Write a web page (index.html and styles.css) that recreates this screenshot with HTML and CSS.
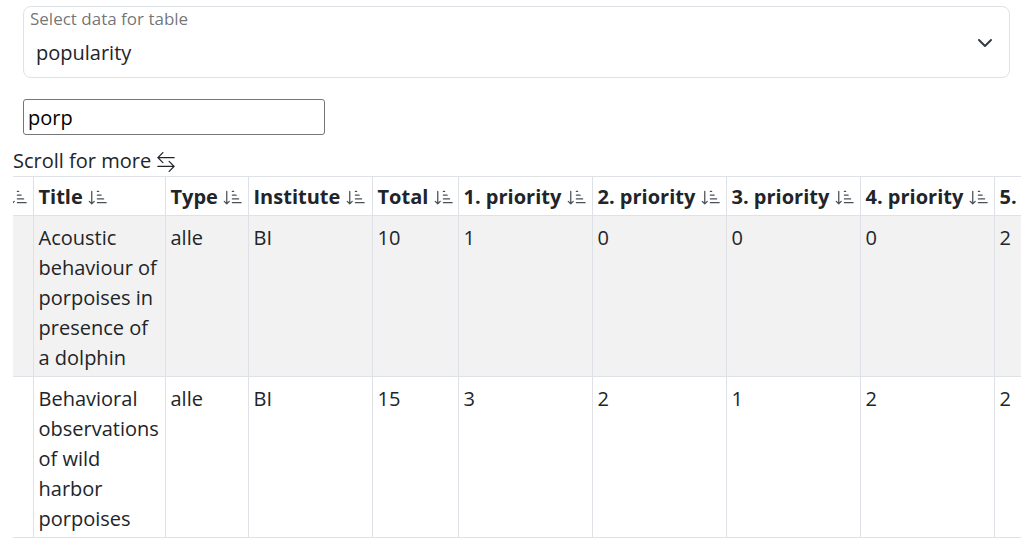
FILE: index.html
```html
<!DOCTYPE html>
<html lang="en">
<head>
<meta charset="utf-8">
<title>Popularity table</title>
<link rel="stylesheet" href="styles.css">
</head>
<body>
<div class="page">
  <div class="floating-select">
    <select class="select-control" id="dataSelect">
      <option selected>popularity</option>
      <option>priorities</option>
    </select>
    <label class="select-label" for="dataSelect">Select data for table</label>
    <svg class="chevron" viewBox="0 0 16 16" width="16" height="16" aria-hidden="true"><path fill="none" stroke="#343a40" stroke-linecap="round" stroke-linejoin="round" stroke-width="2" d="m2 5 6 6 6-6"/></svg>
  </div>

  <input class="filter-input" type="text" value="porp">

  <div class="scroll-hint">Scroll for more <svg class="lr-icon" viewBox="0 0 16 16" width="20" height="20" aria-hidden="true"><path fill="currentColor" fill-rule="evenodd" d="M1 11.5a.5.5 0 0 0 .5.5h11.793l-3.147 3.146a.5.5 0 0 0 .708.708l4-4a.5.5 0 0 0 0-.708l-4-4a.5.5 0 0 0-.708.708L13.293 11H1.5a.5.5 0 0 0-.5.5m14-7a.5.5 0 0 1-.5.5H2.707l3.147 3.146a.5.5 0 1 1-.708.708l-4-4a.5.5 0 0 1 0-.708l4-4a.5.5 0 1 1 .708.708L2.707 4H14.5a.5.5 0 0 1 .5.5"/></svg></div>

  <div class="table-scroll" id="tableScroll">
    <table class="data-table">
      <colgroup>
        <col class="c-id"><col class="c-title"><col class="c-type"><col class="c-inst"><col class="c-total">
        <col class="c-prio"><col class="c-prio"><col class="c-prio"><col class="c-prio"><col class="c-prio">
      </colgroup>
      <thead>
        <tr>
          <th class="th-id">ID <svg class="sort" viewBox="0 0 16 16"><use href="#sorticon"/></svg></th>
          <th>Title <svg class="sort" viewBox="0 0 16 16"><use href="#sorticon"/></svg></th>
          <th>Type <svg class="sort" viewBox="0 0 16 16"><use href="#sorticon"/></svg></th>
          <th>Institute <svg class="sort" viewBox="0 0 16 16"><use href="#sorticon"/></svg></th>
          <th>Total <svg class="sort" viewBox="0 0 16 16"><use href="#sorticon"/></svg></th>
          <th>1. priority <svg class="sort" viewBox="0 0 16 16"><use href="#sorticon"/></svg></th>
          <th>2. priority <svg class="sort" viewBox="0 0 16 16"><use href="#sorticon"/></svg></th>
          <th>3. priority <svg class="sort" viewBox="0 0 16 16"><use href="#sorticon"/></svg></th>
          <th>4. priority <svg class="sort" viewBox="0 0 16 16"><use href="#sorticon"/></svg></th>
          <th>5. priority <svg class="sort" viewBox="0 0 16 16"><use href="#sorticon"/></svg></th>
        </tr>
      </thead>
      <tbody>
        <tr class="striped">
          <td></td>
          <td>Acoustic behaviour of porpoises in presence of a dolphin</td>
          <td>alle</td>
          <td>BI</td>
          <td>10</td>
          <td>1</td>
          <td>0</td>
          <td>0</td>
          <td>0</td>
          <td>2</td>
        </tr>
        <tr>
          <td></td>
          <td>Behavioral observations of wild harbor porpoises</td>
          <td>alle</td>
          <td>BI</td>
          <td>15</td>
          <td>3</td>
          <td>2</td>
          <td>1</td>
          <td>2</td>
          <td>2</td>
        </tr>
      </tbody>
    </table>
  </div>
</div>

<svg class="defs" aria-hidden="true">
  <defs>
    <symbol id="sorticon" viewBox="0 0 16 16">
      <path fill="currentColor" d="M3.5 3.5a.5.5 0 0 0-1 0v8.793l-1.146-1.147a.5.5 0 0 0-.708.708l2 1.999.007.007a.497.497 0 0 0 .7-.006l2-2a.5.5 0 0 0-.707-.708L3.5 12.293zm4 .5a.5.5 0 0 1 0-1h1a.5.5 0 0 1 0 1zm-.5 2.5a.5.5 0 0 1 .5-.5h3a.5.5 0 0 1 0 1h-3a.5.5 0 0 1-.5-.5m0 3a.5.5 0 0 1 .5-.5h5a.5.5 0 0 1 0 1h-5a.5.5 0 0 1-.5-.5m0 3a.5.5 0 0 1 .5-.5h7a.5.5 0 0 1 0 1h-7a.5.5 0 0 1-.5-.5"/>
    </symbol>
  </defs>
</svg>
<script src="script.js"></script>
</body>
</html>
```

FILE: styles.css
```css
* { box-sizing: border-box; }

html, body {
  margin: 0;
  background: #fff;
}

body {
  font-family: "Open Sans", "Noto Sans", sans-serif;
  font-size: 20px;
  line-height: 1.5;
  color: #212529;
}

.page {
  padding: 6px 11px 0 13px;
}

.floating-select {
  position: relative;
  margin: 0 11px 0 10px;
}

.select-control {
  display: block;
  width: 100%;
  height: 72px;
  padding: 31px 48px 9px 12px;
  font-family: inherit;
  font-size: 20px;
  line-height: 30px;
  color: #212529;
  background: #fff;
  border: 1px solid #dee2e6;
  border-radius: 8px;
  appearance: none;
  -webkit-appearance: none;
  outline: none;
}

.select-label {
  position: absolute;
  top: 1px;
  left: 7px;
  font-size: 17px;
  line-height: 24px;
  color: rgba(33, 37, 41, 0.65);
  pointer-events: none;
}

.chevron {
  position: absolute;
  right: 17px;
  top: 29px;
}

.filter-input {
  display: block;
  margin: 21px 0 0 10px;
  width: 302px;
  height: 36px;
  padding: 4px 4px 3px;
  font-family: inherit;
  font-size: 20px;
  color: #000;
  border: 1px solid #767676;
  border-radius: 3px;
  outline: none;
}

.scroll-hint {
  margin-top: 11px;
  line-height: 30px;
  display: flex;
  align-items: center;
  gap: 5px;
}

.lr-icon {
  display: block;
  margin-top: 1px;
}

.table-scroll {
  overflow-x: auto;
  scrollbar-width: none;
}
.table-scroll::-webkit-scrollbar { display: none; }

.data-table {
  border-collapse: collapse;
  table-layout: fixed;
  width: 1155px;
  border-top: 1px solid #dee2e6;
}

.c-id { width: 60px; }
.c-title { width: 132px; }
.c-type { width: 83px; }
.c-inst { width: 124px; }
.c-total { width: 86px; }
.c-prio { width: 134px; }

.data-table th,
.data-table td {
  border: 1px solid #dee2e6;
  border-top: none;
  text-align: left;
  vertical-align: top;
  line-height: 30px;
}

.data-table tr > :first-child { border-left: none; }

.data-table th {
  padding: 5px 5px 3px;
  font-weight: 700;
  white-space: nowrap;
  overflow: hidden;
}

.th-id { text-align: right !important; }

.data-table td {
  padding: 7px 5px 3px;
  font-weight: 400;
}

.striped td { background: #f2f2f2; }

.sort {
  width: 20px;
  height: 20px;
  vertical-align: -3px;
  color: #495057;
}

.defs {
  position: absolute;
  width: 0;
  height: 0;
  overflow: hidden;
}
```

FILE: script.js
```js
document.getElementById('tableScroll').scrollLeft = 40;
```
